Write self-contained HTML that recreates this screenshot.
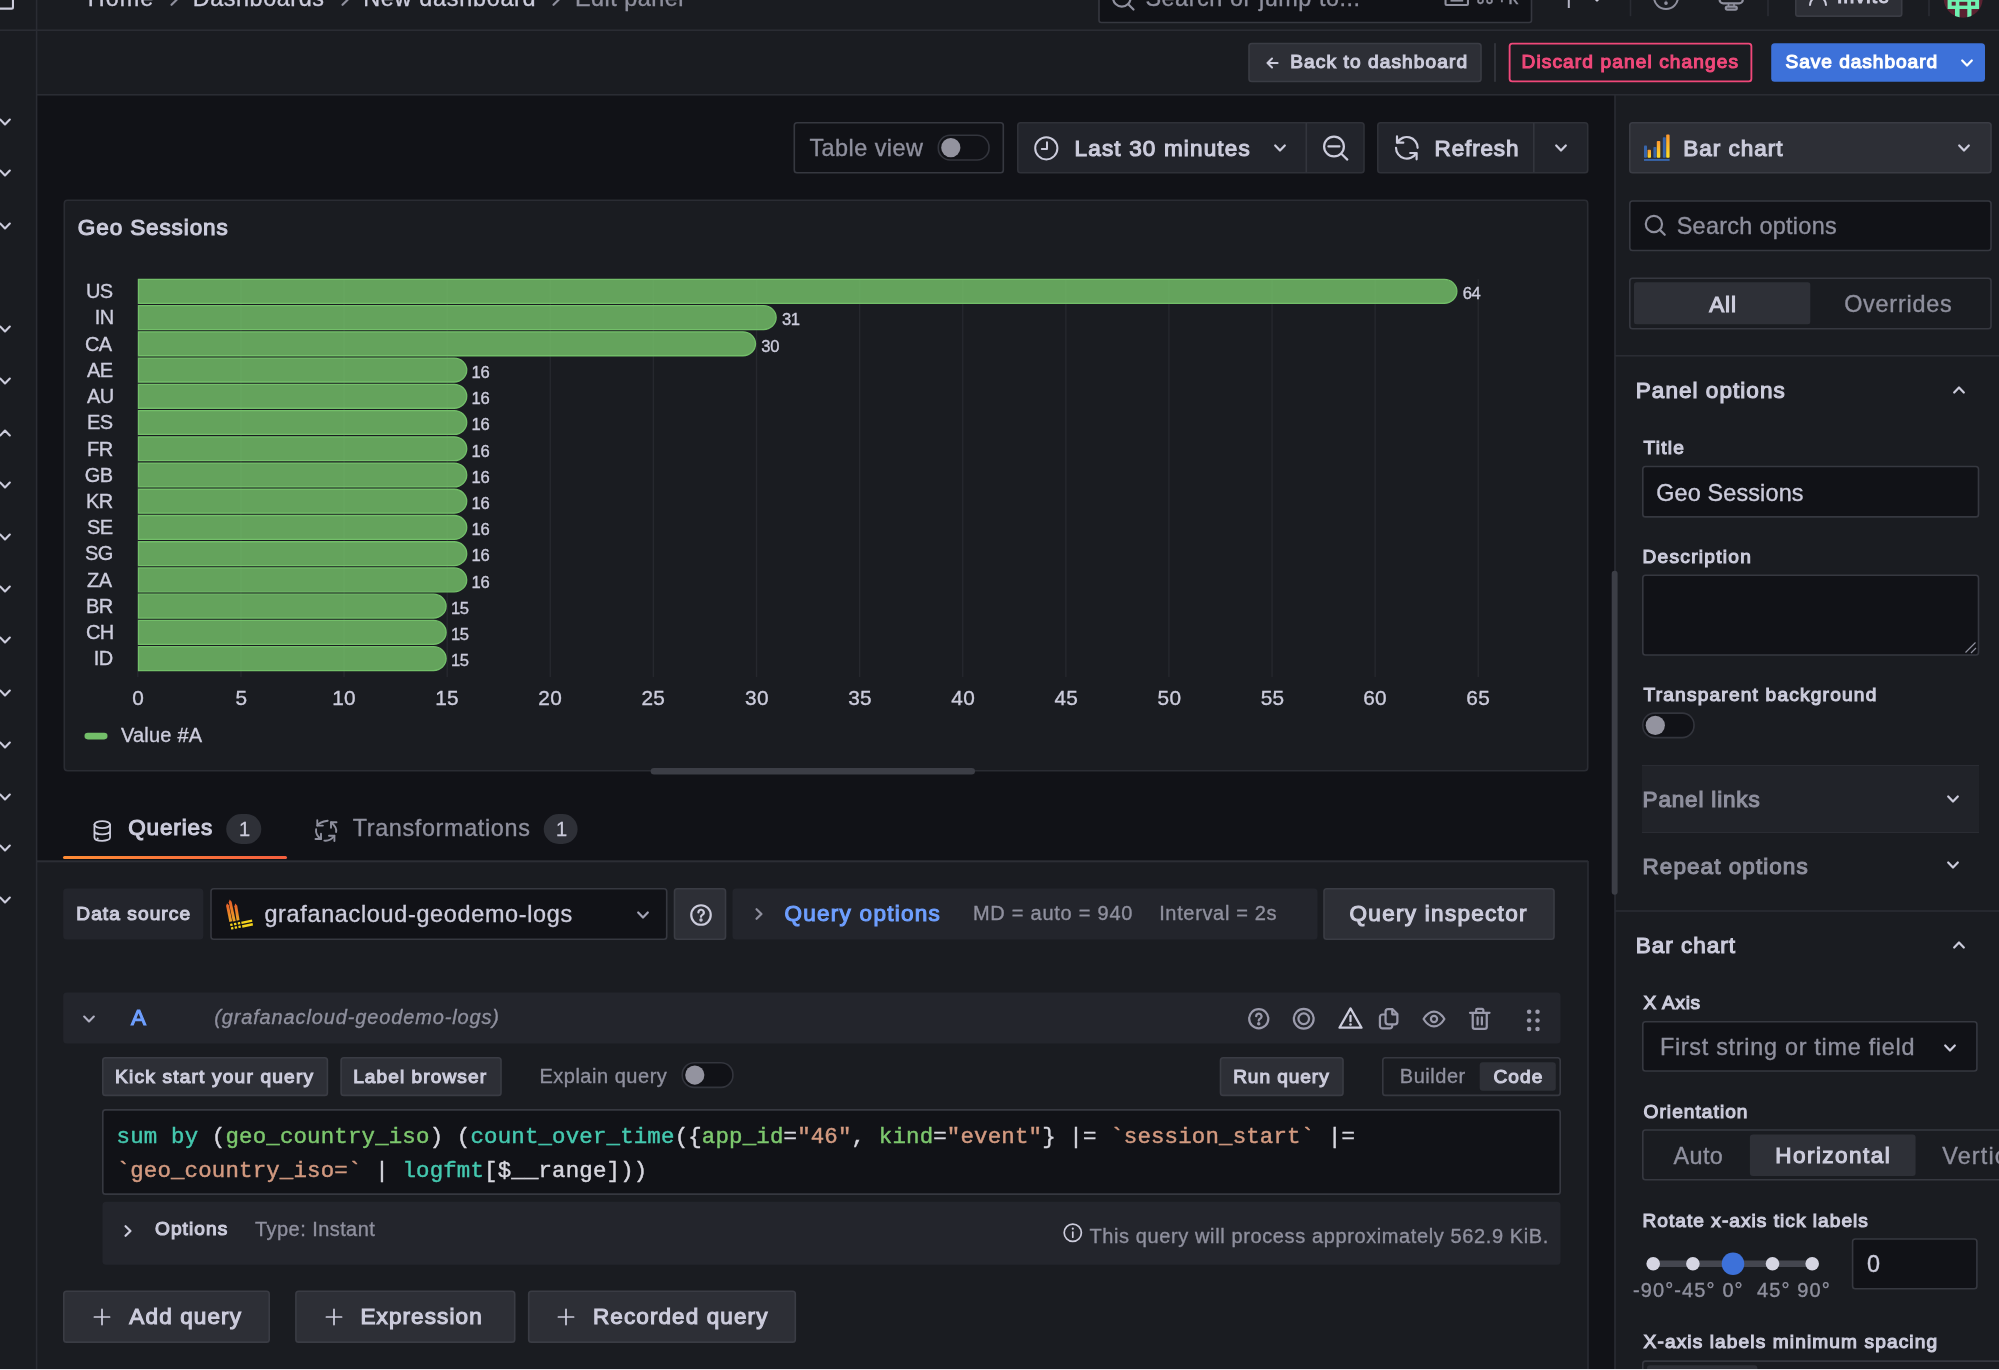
<!DOCTYPE html>
<html lang="en"><head><meta charset="utf-8"><title>Edit panel - New dashboard - Dashboards - Grafana</title>
<style>
html,body{margin:0;padding:0;background:#1a1c21;}
body{width:1999px;height:1370px;position:relative;overflow:hidden;font-family:'Liberation Sans', Arial, sans-serif;color:#ccccdc;}
.b{position:absolute;box-sizing:border-box;display:block}
.t{position:absolute;white-space:pre;font-kerning:normal}
svg{overflow:visible}
#app{position:absolute;left:0;top:0;width:1999px;height:1370px;overflow:hidden;will-change:transform}
</style></head><body><div id="app">
<svg class="b" style="left:-1px;top:-1px" width="2001" height="1372" viewBox="-1 -1 2001 1372"><rect x="0.00" y="0.00" width="1999.00" height="1370.00" rx="0.00" fill="#1a1c21" stroke="none" stroke-width="0"/></svg>
<svg class="b" style="left:36px;top:94px" width="1580" height="768" viewBox="36 94 1580 768"><rect x="37.00" y="95.00" width="1578.00" height="766.00" rx="0.00" fill="#111217" stroke="none" stroke-width="0"/></svg>
<svg class="b" style="left:1587px;top:860px" width="29" height="511" viewBox="1587 860 29 511"><rect x="1588.00" y="861.00" width="27.00" height="509.00" rx="0.00" fill="#111217" stroke="none" stroke-width="0"/></svg>
<svg class="b" style="left:-1px;top:27px" width="2001" height="6" viewBox="-1 27 2001 6"><rect x="0.00" y="29.40" width="1999.00" height="1.6" fill="#2a2c33"/></svg>
<svg class="b" style="left:34px;top:-1px" width="6" height="1372" viewBox="34 -1 6 1372"><rect x="35.80" y="0.00" width="1.6" height="1370.00" fill="#2a2c33"/></svg>
<svg class="b" style="left:-5px;top:-14px" width="20" height="25" viewBox="-5 -14 20 25"><rect x="-2.46" y="-11.46" width="15.42" height="20.12" rx="1.46" fill="none" stroke="#ccccdc" stroke-width="2.08"/></svg>
<span class="t" style="left:87.67px;top:-13px;font-size:23.4px;line-height:23.4px;color:#ccccdc;letter-spacing:1.088px;-webkit-text-stroke:0.35px #ccccdc;">Home</span>
<span class="t" style="left:192.68px;top:-13px;font-size:23.4px;line-height:23.4px;color:#ccccdc;letter-spacing:0.580px;-webkit-text-stroke:0.35px #ccccdc;">Dashboards</span>
<span class="t" style="left:363.18px;top:-13px;font-size:23.4px;line-height:23.4px;color:#ccccdc;letter-spacing:0.718px;-webkit-text-stroke:0.35px #ccccdc;">New dashboard</span>
<span class="t" style="left:574.97px;top:-13px;font-size:23.4px;line-height:23.4px;color:#8f909e;letter-spacing:0.501px;-webkit-text-stroke:0.35px #8f909e;">Edit panel</span>
<svg class="b" style="left:163.50px;top:-10.00px" width="20" height="20" viewBox="-10 -10 20 20"><path d="M-2.45 -4.8 L2.45 0 L-2.45 4.8" fill="none" stroke="#8f909e" stroke-width="2.2" stroke-linecap="round" stroke-linejoin="round"/></svg>
<svg class="b" style="left:334.50px;top:-10.00px" width="20" height="20" viewBox="-10 -10 20 20"><path d="M-2.45 -4.8 L2.45 0 L-2.45 4.8" fill="none" stroke="#8f909e" stroke-width="2.2" stroke-linecap="round" stroke-linejoin="round"/></svg>
<svg class="b" style="left:546.00px;top:-10.00px" width="20" height="20" viewBox="-10 -10 20 20"><path d="M-2.45 -4.8 L2.45 0 L-2.45 4.8" fill="none" stroke="#8f909e" stroke-width="2.2" stroke-linecap="round" stroke-linejoin="round"/></svg>
<svg class="b" style="left:1097px;top:-32px" width="437" height="57" viewBox="1097 -32 437 57"><rect x="1099.00" y="-29.70" width="432.50" height="52.20" rx="2.20" fill="#111217" stroke="#363840" stroke-width="1.6"/></svg>
<svg class="b" style="left:1109.40px;top:-14.90px;" width="28.00" height="28.00" viewBox="0 0 24 24"><g fill="none" stroke="#8f909e" stroke-width="1.9" stroke-linecap="round" stroke-linejoin="round"><circle cx="11" cy="11" r="7.5"/><path d="M16.5 16.5 L21 21"/></g></svg>
<span class="t" style="left:1145.38px;top:-13px;font-size:23.4px;line-height:23.4px;color:#8f909e;letter-spacing:0.560px;-webkit-text-stroke:0.35px #8f909e;">Search or jump to...</span>
<svg class="b" style="left:1443px;top:-12px" width="27" height="20" viewBox="1443 -12 27 20"><rect x="1445.54" y="-9.46" width="22.42" height="14.52" rx="0.96" fill="none" stroke="#8f909e" stroke-width="2.08"/></svg>
<svg class="b" style="left:1449px;top:-3px" width="16" height="7" viewBox="1449 -3 16 7"><rect x="1450.50" y="-0.80" width="12.70" height="2.4" fill="#8f909e"/></svg>
<span class="t" style="left:1475.17px;top:-13px;font-size:20.0px;line-height:20.0px;color:#8f909e;letter-spacing:0.735px;-webkit-text-stroke:0.35px #8f909e;">⌘+k</span>
<svg class="b" style="left:1565px;top:-11px" width="7" height="20" viewBox="1565 -11 7 20"><rect x="1567.80" y="-10.00" width="2" height="18.00" fill="#b4b4c4"/></svg>
<svg class="b" style="left:1587.00px;top:-12.20px" width="20" height="20" viewBox="-10 -10 20 20"><path d="M-4.8 -2.45 L0 2.45 L4.8 -2.45" fill="none" stroke="#ccccdc" stroke-width="2.25" stroke-linecap="round" stroke-linejoin="round"/></svg>
<svg class="b" style="left:1627px;top:-6px" width="7" height="24" viewBox="1627 -6 7 24"><rect x="1629.70" y="-5.00" width="1.6" height="21.20" fill="#2a2c33"/></svg>
<svg class="b" style="left:1650.00px;top:-19.50px;" width="32.00" height="32.00" viewBox="0 0 24 24"><g fill="none" stroke="#8f909e" stroke-width="1.5" stroke-linecap="round" stroke-linejoin="round"><circle cx="12" cy="12" r="9"/><path d="M9.6 9.6 a2.5 2.5 0 1 1 3.6 2.3 c-.8 .4 -1.2 .9 -1.2 1.8"/><circle cx="12" cy="16.6" r=".6" fill="currentColor"/></g></svg>
<svg class="b" style="left:1714.00px;top:-14.00px;" width="34.00" height="26.00" viewBox="0 0 34 26"><g fill="none" stroke="#8f909e" stroke-width="2.2" stroke-linecap="round" stroke-linejoin="round"><rect x="5.6" y="-4" width="23.2" height="21.4" rx="3.6"/><rect x="11.8" y="20.6" width="11" height="3" rx="1.5"/><path d="M14.5 18 V20 M20 18 V20" stroke-width="1.6"/></g></svg>
<svg class="b" style="left:1765px;top:-6px" width="6" height="24" viewBox="1765 -6 6 24"><rect x="1767.20" y="-5.00" width="1.6" height="21.20" fill="#2a2c33"/></svg>
<svg class="b" style="left:1794px;top:-24px" width="110" height="42" viewBox="1794 -24 110 42"><rect x="1795.80" y="-21.70" width="105.90" height="37.80" rx="2.20" fill="#2d2f36" stroke="#3a3c44" stroke-width="1.6"/></svg>
<svg class="b" style="left:1808.00px;top:-14.00px;" width="20.00" height="20.00" viewBox="0 0 20 20"><g fill="none" stroke="#ccccdc" stroke-width="2" stroke-linecap="round"><circle cx="10" cy="3" r="5"/><path d="M2 19 a8 8 0 0 1 16 0"/></g></svg>
<span class="t" style="left:1837.05px;top:-13px;font-size:19.12px;line-height:19.12px;color:#ccccdc;letter-spacing:1.211px;-webkit-text-stroke:1.1px #ccccdc;">Invite</span>
<svg class="b" style="left:1926px;top:-6px" width="6" height="24" viewBox="1926 -6 6 24"><rect x="1928.20" y="-5.00" width="1.6" height="21.20" fill="#2a2c33"/></svg>
<svg class="b" style="left:1940px;top:-24px" width="48" height="48" viewBox="1940 -24 48 48"><defs><clipPath id="av"><circle cx="1963.2" cy="-1.8" r="19.5"/></clipPath></defs><g clip-path="url(#av)"><rect x="1940" y="-24" width="48" height="48" fill="#5a2231"/><rect x="1947.6" y="-24" width="31.5" height="33" fill="#6ef0b0"/><rect x="1951.7" y="1.8" width="4" height="3.8" fill="#5a2231"/><rect x="1959.3" y="1.8" width="8" height="3.8" fill="#5a2231"/><rect x="1971" y="1.8" width="4.2" height="3.8" fill="#5a2231"/><rect x="1955" y="8" width="4.6" height="14" fill="#6ef0b0"/><rect x="1967.3" y="8" width="4.2" height="14" fill="#6ef0b0"/></g></svg>
<svg class="b" style="left:36px;top:92px" width="1964" height="6" viewBox="36 92 1964 6"><rect x="37.00" y="94.00" width="1962.00" height="1.6" fill="#2a2c33"/></svg>
<svg class="b" style="left:1247px;top:41px" width="236" height="43" viewBox="1247 41 236 43"><rect x="1249.00" y="43.50" width="232.00" height="38.00" rx="2.70" fill="#2d2f36" stroke="#3a3c44" stroke-width="1.6"/></svg>
<svg class="b" style="left:1264.50px;top:55.50px;" width="14.00" height="14.00" viewBox="0 0 14 14"><path d="M12.6 7 H2.8 M7 2.5 L2.5 7 L7 11.5" fill="none" stroke="#ccccdc" stroke-width="2" stroke-linecap="round" stroke-linejoin="round"/></svg>
<span class="t" style="left:1290.25px;top:52px;font-size:19.12px;line-height:19.12px;color:#ccccdc;letter-spacing:1.092px;-webkit-text-stroke:1.1px #ccccdc;">Back to dashboard</span>
<svg class="b" style="left:1492px;top:42px" width="6" height="41" viewBox="1492 42 6 41"><rect x="1494.20" y="43.20" width="1.6" height="38.60" fill="#363840"/></svg>
<svg class="b" style="left:1507px;top:41px" width="247" height="43" viewBox="1507 41 247 43"><rect x="1509.62" y="43.62" width="241.76" height="37.76" rx="2.58" fill="none" stroke="#f0487a" stroke-width="1.8399999999999999"/></svg>
<span class="t" style="left:1521.55px;top:52px;font-size:19.12px;line-height:19.12px;color:#f0487a;letter-spacing:1.103px;-webkit-text-stroke:1.1px #f0487a;">Discard panel changes</span>
<svg class="b" style="left:1770px;top:42px" width="216" height="41" viewBox="1770 42 216 41"><rect x="1771.20" y="43.20" width="213.80" height="38.60" rx="3.50" fill="#3d71d9" stroke="none" stroke-width="0"/></svg>
<span class="t" style="left:1785.55px;top:52px;font-size:19.12px;line-height:19.12px;color:#ffffff;letter-spacing:0.950px;-webkit-text-stroke:1.1px #ffffff;">Save dashboard</span>
<svg class="b" style="left:1957.25px;top:53.00px" width="20" height="20" viewBox="-10 -10 20 20"><path d="M-4.8 -2.45 L0 2.45 L4.8 -2.45" fill="none" stroke="#ffffff" stroke-width="2.25" stroke-linecap="round" stroke-linejoin="round"/></svg>
<svg class="b" style="left:-4.80px;top:111.80px" width="20" height="20" viewBox="-10 -10 20 20"><path d="M-4.8 -2.45 L0 2.45 L4.8 -2.45" fill="none" stroke="#ccccdc" stroke-width="2.1" stroke-linecap="round" stroke-linejoin="round"/></svg>
<svg class="b" style="left:-4.80px;top:163.30px" width="20" height="20" viewBox="-10 -10 20 20"><path d="M-4.8 -2.45 L0 2.45 L4.8 -2.45" fill="none" stroke="#ccccdc" stroke-width="2.1" stroke-linecap="round" stroke-linejoin="round"/></svg>
<svg class="b" style="left:-4.80px;top:215.50px" width="20" height="20" viewBox="-10 -10 20 20"><path d="M-4.8 -2.45 L0 2.45 L4.8 -2.45" fill="none" stroke="#ccccdc" stroke-width="2.1" stroke-linecap="round" stroke-linejoin="round"/></svg>
<svg class="b" style="left:-4.80px;top:318.80px" width="20" height="20" viewBox="-10 -10 20 20"><path d="M-4.8 -2.45 L0 2.45 L4.8 -2.45" fill="none" stroke="#ccccdc" stroke-width="2.1" stroke-linecap="round" stroke-linejoin="round"/></svg>
<svg class="b" style="left:-4.80px;top:371.20px" width="20" height="20" viewBox="-10 -10 20 20"><path d="M-4.8 -2.45 L0 2.45 L4.8 -2.45" fill="none" stroke="#ccccdc" stroke-width="2.1" stroke-linecap="round" stroke-linejoin="round"/></svg>
<svg class="b" style="left:-4.80px;top:475.00px" width="20" height="20" viewBox="-10 -10 20 20"><path d="M-4.8 -2.45 L0 2.45 L4.8 -2.45" fill="none" stroke="#ccccdc" stroke-width="2.1" stroke-linecap="round" stroke-linejoin="round"/></svg>
<svg class="b" style="left:-4.80px;top:527.00px" width="20" height="20" viewBox="-10 -10 20 20"><path d="M-4.8 -2.45 L0 2.45 L4.8 -2.45" fill="none" stroke="#ccccdc" stroke-width="2.1" stroke-linecap="round" stroke-linejoin="round"/></svg>
<svg class="b" style="left:-4.80px;top:579.00px" width="20" height="20" viewBox="-10 -10 20 20"><path d="M-4.8 -2.45 L0 2.45 L4.8 -2.45" fill="none" stroke="#ccccdc" stroke-width="2.1" stroke-linecap="round" stroke-linejoin="round"/></svg>
<svg class="b" style="left:-4.80px;top:630.30px" width="20" height="20" viewBox="-10 -10 20 20"><path d="M-4.8 -2.45 L0 2.45 L4.8 -2.45" fill="none" stroke="#ccccdc" stroke-width="2.1" stroke-linecap="round" stroke-linejoin="round"/></svg>
<svg class="b" style="left:-4.80px;top:682.80px" width="20" height="20" viewBox="-10 -10 20 20"><path d="M-4.8 -2.45 L0 2.45 L4.8 -2.45" fill="none" stroke="#ccccdc" stroke-width="2.1" stroke-linecap="round" stroke-linejoin="round"/></svg>
<svg class="b" style="left:-4.80px;top:734.80px" width="20" height="20" viewBox="-10 -10 20 20"><path d="M-4.8 -2.45 L0 2.45 L4.8 -2.45" fill="none" stroke="#ccccdc" stroke-width="2.1" stroke-linecap="round" stroke-linejoin="round"/></svg>
<svg class="b" style="left:-4.80px;top:786.50px" width="20" height="20" viewBox="-10 -10 20 20"><path d="M-4.8 -2.45 L0 2.45 L4.8 -2.45" fill="none" stroke="#ccccdc" stroke-width="2.1" stroke-linecap="round" stroke-linejoin="round"/></svg>
<svg class="b" style="left:-4.80px;top:838.30px" width="20" height="20" viewBox="-10 -10 20 20"><path d="M-4.8 -2.45 L0 2.45 L4.8 -2.45" fill="none" stroke="#ccccdc" stroke-width="2.1" stroke-linecap="round" stroke-linejoin="round"/></svg>
<svg class="b" style="left:-4.80px;top:889.80px" width="20" height="20" viewBox="-10 -10 20 20"><path d="M-4.8 -2.45 L0 2.45 L4.8 -2.45" fill="none" stroke="#ccccdc" stroke-width="2.1" stroke-linecap="round" stroke-linejoin="round"/></svg>
<svg class="b" style="left:-4.80px;top:423.20px" width="20" height="20" viewBox="-10 -10 20 20"><path d="M-4.8 2.45 L0 -2.45 L4.8 2.45" fill="none" stroke="#ccccdc" stroke-width="2.1" stroke-linecap="round" stroke-linejoin="round"/></svg>
<svg class="b" style="left:792px;top:121px" width="214" height="54" viewBox="792 121 214 54"><rect x="794.30" y="122.80" width="209.00" height="49.90" rx="2.70" fill="none" stroke="#363840" stroke-width="1.6"/></svg>
<span class="t" style="left:809.38px;top:137px;font-size:23.4px;line-height:23.4px;color:#8f909e;letter-spacing:0.481px;-webkit-text-stroke:0.35px #8f909e;">Table view</span>
<svg class="b" style="left:936px;top:133px" width="55" height="29" viewBox="936 133 55 29"><rect x="938.30" y="135.30" width="50.70" height="24.70" rx="11.85" fill="#111217" stroke="#33353d" stroke-width="1.6"/></svg>
<svg class="b" style="left:940px;top:137px" width="22" height="22" viewBox="940 137 22 22"><rect x="941.20" y="138.05" width="19.20" height="19.20" rx="9.60" fill="#93939f" stroke="none" stroke-width="0"/></svg>
<svg class="b" style="left:1016px;top:121px" width="350" height="54" viewBox="1016 121 350 54"><rect x="1017.80" y="122.80" width="346.20" height="49.90" rx="2.70" fill="#22242b" stroke="#2f3138" stroke-width="1.6"/></svg>
<svg class="b" style="left:1303px;top:122px" width="6" height="52" viewBox="1303 122 6 52"><rect x="1305.50" y="123.00" width="1.6" height="49.50" fill="#33353d"/></svg>
<svg class="b" style="left:1034.30px;top:135.50px;" width="24.60" height="24.60" viewBox="0 0 24.6 24.6"><g fill="none" stroke="#ccccdc" stroke-width="2.0" stroke-linecap="round" stroke-linejoin="round"><circle cx="12.3" cy="12.3" r="11.1"/><path d="M13 6.2 V13 H7.8"/></g></svg>
<span class="t" style="left:1074.55px;top:138px;font-size:22.52px;line-height:22.52px;color:#ccccdc;letter-spacing:1.158px;-webkit-text-stroke:1.1px #ccccdc;">Last 30 minutes</span>
<svg class="b" style="left:1270.30px;top:137.65px" width="20" height="20" viewBox="-10 -10 20 20"><path d="M-4.8 -2.45 L0 2.45 L4.8 -2.45" fill="none" stroke="#ccccdc" stroke-width="2.25" stroke-linecap="round" stroke-linejoin="round"/></svg>
<svg class="b" style="left:1322.00px;top:135.00px;" width="27.00" height="27.00" viewBox="0 0 27 27"><g fill="none" stroke="#ccccdc" stroke-width="2.2" stroke-linecap="round"><circle cx="12" cy="11.5" r="9.9"/><path d="M19.3 18.8 L25.3 24.6 M6.4 11.4 H17.4"/></g></svg>
<svg class="b" style="left:1376px;top:121px" width="214" height="54" viewBox="1376 121 214 54"><rect x="1377.80" y="122.80" width="209.90" height="49.90" rx="2.70" fill="#22242b" stroke="#2f3138" stroke-width="1.6"/></svg>
<svg class="b" style="left:1531px;top:122px" width="6" height="52" viewBox="1531 122 6 52"><rect x="1533.00" y="123.00" width="1.6" height="49.50" fill="#33353d"/></svg>
<svg class="b" style="left:1394.00px;top:135.00px;" width="25.50" height="25.50" viewBox="0 0 25.5 25.5"><g fill="none" stroke="#ccccdc" stroke-width="2.2" stroke-linecap="round" stroke-linejoin="round"><path d="M3.4 7.5 A10.8 10.8 0 0 1 23.6 12.8 M2 12.8 A10.8 10.8 0 0 0 22.2 18.1"/><path d="M3 1.4 V7.7 H9.3 M16.2 18 H22.6 V24.3"/></g></svg>
<span class="t" style="left:1434.55px;top:138px;font-size:22.52px;line-height:22.52px;color:#ccccdc;letter-spacing:0.847px;-webkit-text-stroke:1.1px #ccccdc;">Refresh</span>
<svg class="b" style="left:1550.75px;top:137.65px" width="20" height="20" viewBox="-10 -10 20 20"><path d="M-4.8 -2.45 L0 2.45 L4.8 -2.45" fill="none" stroke="#ccccdc" stroke-width="2.25" stroke-linecap="round" stroke-linejoin="round"/></svg>
<svg class="b" style="left:62px;top:198px" width="1528" height="575" viewBox="62 198 1528 575"><rect x="64.30" y="200.30" width="1523.40" height="570.40" rx="3.20" fill="#1a1c21" stroke="#2a2c33" stroke-width="1.6"/></svg>
<span class="t" style="left:77.85px;top:217px;font-size:22.52px;line-height:22.52px;color:#ccccdc;letter-spacing:0.880px;-webkit-text-stroke:1.1px #ccccdc;">Geo Sessions</span>
<svg class="b" style="left:0.00px;top:0.00px;pointer-events:none;" width="1999.00" height="700.00" viewBox="0 0 1999 700"><line x1="137.85" y1="279" x2="137.85" y2="677" stroke="#26282e" stroke-width="1.4"/><line x1="240.96" y1="279" x2="240.96" y2="677" stroke="#26282e" stroke-width="1.4"/><line x1="344.07" y1="279" x2="344.07" y2="677" stroke="#26282e" stroke-width="1.4"/><line x1="447.18" y1="279" x2="447.18" y2="677" stroke="#26282e" stroke-width="1.4"/><line x1="550.29" y1="279" x2="550.29" y2="677" stroke="#26282e" stroke-width="1.4"/><line x1="653.40" y1="279" x2="653.40" y2="677" stroke="#26282e" stroke-width="1.4"/><line x1="756.51" y1="279" x2="756.51" y2="677" stroke="#26282e" stroke-width="1.4"/><line x1="859.62" y1="279" x2="859.62" y2="677" stroke="#26282e" stroke-width="1.4"/><line x1="962.73" y1="279" x2="962.73" y2="677" stroke="#26282e" stroke-width="1.4"/><line x1="1065.84" y1="279" x2="1065.84" y2="677" stroke="#26282e" stroke-width="1.4"/><line x1="1168.95" y1="279" x2="1168.95" y2="677" stroke="#26282e" stroke-width="1.4"/><line x1="1272.06" y1="279" x2="1272.06" y2="677" stroke="#26282e" stroke-width="1.4"/><line x1="1375.17" y1="279" x2="1375.17" y2="677" stroke="#26282e" stroke-width="1.4"/><line x1="1478.28" y1="279" x2="1478.28" y2="677" stroke="#26282e" stroke-width="1.4"/><path d="M138.50 279.40 H1444.29 A12.60 11.95 0 0 1 1444.29 303.30 H138.50 Z" fill="#73bf69" fill-opacity=".83" stroke="#73bf69" stroke-width="1.3"/><path d="M138.50 305.63 H763.57 A12.60 11.95 0 0 1 763.57 329.53 H138.50 Z" fill="#73bf69" fill-opacity=".83" stroke="#73bf69" stroke-width="1.3"/><path d="M138.50 331.87 H742.94 A12.60 11.95 0 0 1 742.94 355.77 H138.50 Z" fill="#73bf69" fill-opacity=".83" stroke="#73bf69" stroke-width="1.3"/><path d="M138.50 358.10 H454.15 A12.60 11.95 0 0 1 454.15 382.00 H138.50 Z" fill="#73bf69" fill-opacity=".83" stroke="#73bf69" stroke-width="1.3"/><path d="M138.50 384.33 H454.15 A12.60 11.95 0 0 1 454.15 408.23 H138.50 Z" fill="#73bf69" fill-opacity=".83" stroke="#73bf69" stroke-width="1.3"/><path d="M138.50 410.56 H454.15 A12.60 11.95 0 0 1 454.15 434.46 H138.50 Z" fill="#73bf69" fill-opacity=".83" stroke="#73bf69" stroke-width="1.3"/><path d="M138.50 436.80 H454.15 A12.60 11.95 0 0 1 454.15 460.70 H138.50 Z" fill="#73bf69" fill-opacity=".83" stroke="#73bf69" stroke-width="1.3"/><path d="M138.50 463.03 H454.15 A12.60 11.95 0 0 1 454.15 486.93 H138.50 Z" fill="#73bf69" fill-opacity=".83" stroke="#73bf69" stroke-width="1.3"/><path d="M138.50 489.26 H454.15 A12.60 11.95 0 0 1 454.15 513.16 H138.50 Z" fill="#73bf69" fill-opacity=".83" stroke="#73bf69" stroke-width="1.3"/><path d="M138.50 515.50 H454.15 A12.60 11.95 0 0 1 454.15 539.40 H138.50 Z" fill="#73bf69" fill-opacity=".83" stroke="#73bf69" stroke-width="1.3"/><path d="M138.50 541.73 H454.15 A12.60 11.95 0 0 1 454.15 565.63 H138.50 Z" fill="#73bf69" fill-opacity=".83" stroke="#73bf69" stroke-width="1.3"/><path d="M138.50 567.96 H454.15 A12.60 11.95 0 0 1 454.15 591.86 H138.50 Z" fill="#73bf69" fill-opacity=".83" stroke="#73bf69" stroke-width="1.3"/><path d="M138.50 594.20 H433.52 A12.60 11.95 0 0 1 433.52 618.10 H138.50 Z" fill="#73bf69" fill-opacity=".83" stroke="#73bf69" stroke-width="1.3"/><path d="M138.50 620.43 H433.52 A12.60 11.95 0 0 1 433.52 644.33 H138.50 Z" fill="#73bf69" fill-opacity=".83" stroke="#73bf69" stroke-width="1.3"/><path d="M138.50 646.66 H433.52 A12.60 11.95 0 0 1 433.52 670.56 H138.50 Z" fill="#73bf69" fill-opacity=".83" stroke="#73bf69" stroke-width="1.3"/></svg>
<span class="t" style="left:85.88px;top:281px;font-size:20.0px;line-height:20.0px;color:#ccccdc;letter-spacing:-0.500px;-webkit-text-stroke:0.35px #ccccdc;">US</span>
<span class="t" style="left:1462.70px;top:286px;font-size:16.6px;line-height:16.6px;color:#ccccdc;letter-spacing:-0.400px;-webkit-text-stroke:0.35px #ccccdc;">64</span>
<span class="t" style="left:94.77px;top:307px;font-size:20.0px;line-height:20.0px;color:#ccccdc;letter-spacing:-0.500px;-webkit-text-stroke:0.35px #ccccdc;">IN</span>
<span class="t" style="left:781.97px;top:312px;font-size:16.6px;line-height:16.6px;color:#ccccdc;letter-spacing:-0.400px;-webkit-text-stroke:0.35px #ccccdc;">31</span>
<span class="t" style="left:84.88px;top:334px;font-size:20.0px;line-height:20.0px;color:#ccccdc;letter-spacing:-0.500px;-webkit-text-stroke:0.35px #ccccdc;">CA</span>
<span class="t" style="left:761.35px;top:339px;font-size:16.6px;line-height:16.6px;color:#ccccdc;letter-spacing:-0.400px;-webkit-text-stroke:0.35px #ccccdc;">30</span>
<span class="t" style="left:86.99px;top:360px;font-size:20.0px;line-height:20.0px;color:#ccccdc;letter-spacing:-0.500px;-webkit-text-stroke:0.35px #ccccdc;">AE</span>
<span class="t" style="left:471.55px;top:365px;font-size:16.6px;line-height:16.6px;color:#ccccdc;letter-spacing:-0.400px;-webkit-text-stroke:0.35px #ccccdc;">16</span>
<span class="t" style="left:86.99px;top:386px;font-size:20.0px;line-height:20.0px;color:#ccccdc;letter-spacing:-0.500px;-webkit-text-stroke:0.35px #ccccdc;">AU</span>
<span class="t" style="left:471.55px;top:391px;font-size:16.6px;line-height:16.6px;color:#ccccdc;letter-spacing:-0.400px;-webkit-text-stroke:0.35px #ccccdc;">16</span>
<span class="t" style="left:86.99px;top:412px;font-size:20.0px;line-height:20.0px;color:#ccccdc;letter-spacing:-0.500px;-webkit-text-stroke:0.35px #ccccdc;">ES</span>
<span class="t" style="left:471.55px;top:417px;font-size:16.6px;line-height:16.6px;color:#ccccdc;letter-spacing:-0.400px;-webkit-text-stroke:0.35px #ccccdc;">16</span>
<span class="t" style="left:87.11px;top:439px;font-size:20.0px;line-height:20.0px;color:#ccccdc;letter-spacing:-0.500px;-webkit-text-stroke:0.35px #ccccdc;">FR</span>
<span class="t" style="left:471.55px;top:444px;font-size:16.6px;line-height:16.6px;color:#ccccdc;letter-spacing:-0.400px;-webkit-text-stroke:0.35px #ccccdc;">16</span>
<span class="t" style="left:84.77px;top:465px;font-size:20.0px;line-height:20.0px;color:#ccccdc;letter-spacing:-0.500px;-webkit-text-stroke:0.35px #ccccdc;">GB</span>
<span class="t" style="left:471.55px;top:470px;font-size:16.6px;line-height:16.6px;color:#ccccdc;letter-spacing:-0.400px;-webkit-text-stroke:0.35px #ccccdc;">16</span>
<span class="t" style="left:85.99px;top:491px;font-size:20.0px;line-height:20.0px;color:#ccccdc;letter-spacing:-0.500px;-webkit-text-stroke:0.35px #ccccdc;">KR</span>
<span class="t" style="left:471.55px;top:496px;font-size:16.6px;line-height:16.6px;color:#ccccdc;letter-spacing:-0.400px;-webkit-text-stroke:0.35px #ccccdc;">16</span>
<span class="t" style="left:86.99px;top:517px;font-size:20.0px;line-height:20.0px;color:#ccccdc;letter-spacing:-0.500px;-webkit-text-stroke:0.35px #ccccdc;">SE</span>
<span class="t" style="left:471.55px;top:522px;font-size:16.6px;line-height:16.6px;color:#ccccdc;letter-spacing:-0.400px;-webkit-text-stroke:0.35px #ccccdc;">16</span>
<span class="t" style="left:84.99px;top:543px;font-size:20.0px;line-height:20.0px;color:#ccccdc;letter-spacing:-0.500px;-webkit-text-stroke:0.35px #ccccdc;">SG</span>
<span class="t" style="left:471.55px;top:548px;font-size:16.6px;line-height:16.6px;color:#ccccdc;letter-spacing:-0.400px;-webkit-text-stroke:0.35px #ccccdc;">16</span>
<span class="t" style="left:87.11px;top:570px;font-size:20.0px;line-height:20.0px;color:#ccccdc;letter-spacing:-0.500px;-webkit-text-stroke:0.35px #ccccdc;">ZA</span>
<span class="t" style="left:471.55px;top:575px;font-size:16.6px;line-height:16.6px;color:#ccccdc;letter-spacing:-0.400px;-webkit-text-stroke:0.35px #ccccdc;">16</span>
<span class="t" style="left:85.99px;top:596px;font-size:20.0px;line-height:20.0px;color:#ccccdc;letter-spacing:-0.500px;-webkit-text-stroke:0.35px #ccccdc;">BR</span>
<span class="t" style="left:450.93px;top:601px;font-size:16.6px;line-height:16.6px;color:#ccccdc;letter-spacing:-0.400px;-webkit-text-stroke:0.35px #ccccdc;">15</span>
<span class="t" style="left:85.88px;top:622px;font-size:20.0px;line-height:20.0px;color:#ccccdc;letter-spacing:-0.500px;-webkit-text-stroke:0.35px #ccccdc;">CH</span>
<span class="t" style="left:450.93px;top:627px;font-size:16.6px;line-height:16.6px;color:#ccccdc;letter-spacing:-0.400px;-webkit-text-stroke:0.35px #ccccdc;">15</span>
<span class="t" style="left:93.77px;top:648px;font-size:20.0px;line-height:20.0px;color:#ccccdc;letter-spacing:-0.500px;-webkit-text-stroke:0.35px #ccccdc;">ID</span>
<span class="t" style="left:450.93px;top:653px;font-size:16.6px;line-height:16.6px;color:#ccccdc;letter-spacing:-0.400px;-webkit-text-stroke:0.35px #ccccdc;">15</span>
<span class="t" style="left:132.35px;top:688px;font-size:20.8px;line-height:20.8px;color:#ccccdc;letter-spacing:0.300px;-webkit-text-stroke:0.35px #ccccdc;">0</span>
<span class="t" style="left:235.46px;top:688px;font-size:20.8px;line-height:20.8px;color:#ccccdc;letter-spacing:0.300px;-webkit-text-stroke:0.35px #ccccdc;">5</span>
<span class="t" style="left:332.14px;top:688px;font-size:20.8px;line-height:20.8px;color:#ccccdc;letter-spacing:0.300px;-webkit-text-stroke:0.35px #ccccdc;">10</span>
<span class="t" style="left:435.25px;top:688px;font-size:20.8px;line-height:20.8px;color:#ccccdc;letter-spacing:0.300px;-webkit-text-stroke:0.35px #ccccdc;">15</span>
<span class="t" style="left:538.36px;top:688px;font-size:20.8px;line-height:20.8px;color:#ccccdc;letter-spacing:0.300px;-webkit-text-stroke:0.35px #ccccdc;">20</span>
<span class="t" style="left:641.47px;top:688px;font-size:20.8px;line-height:20.8px;color:#ccccdc;letter-spacing:0.300px;-webkit-text-stroke:0.35px #ccccdc;">25</span>
<span class="t" style="left:745.08px;top:688px;font-size:20.8px;line-height:20.8px;color:#ccccdc;letter-spacing:0.300px;-webkit-text-stroke:0.35px #ccccdc;">30</span>
<span class="t" style="left:848.19px;top:688px;font-size:20.8px;line-height:20.8px;color:#ccccdc;letter-spacing:0.300px;-webkit-text-stroke:0.35px #ccccdc;">35</span>
<span class="t" style="left:951.30px;top:688px;font-size:20.8px;line-height:20.8px;color:#ccccdc;letter-spacing:0.300px;-webkit-text-stroke:0.35px #ccccdc;">40</span>
<span class="t" style="left:1054.41px;top:688px;font-size:20.8px;line-height:20.8px;color:#ccccdc;letter-spacing:0.300px;-webkit-text-stroke:0.35px #ccccdc;">45</span>
<span class="t" style="left:1157.52px;top:688px;font-size:20.8px;line-height:20.8px;color:#ccccdc;letter-spacing:0.300px;-webkit-text-stroke:0.35px #ccccdc;">50</span>
<span class="t" style="left:1260.63px;top:688px;font-size:20.8px;line-height:20.8px;color:#ccccdc;letter-spacing:0.300px;-webkit-text-stroke:0.35px #ccccdc;">55</span>
<span class="t" style="left:1363.24px;top:688px;font-size:20.8px;line-height:20.8px;color:#ccccdc;letter-spacing:0.300px;-webkit-text-stroke:0.35px #ccccdc;">60</span>
<span class="t" style="left:1466.35px;top:688px;font-size:20.8px;line-height:20.8px;color:#ccccdc;letter-spacing:0.300px;-webkit-text-stroke:0.35px #ccccdc;">65</span>
<svg class="b" style="left:83px;top:731px" width="26" height="10" viewBox="83 731 26 10"><rect x="84.50" y="732.80" width="23.00" height="6.60" rx="3.30" fill="#73bf69" stroke="none" stroke-width="0"/></svg>
<span class="t" style="left:120.88px;top:725px;font-size:20.0px;line-height:20.0px;color:#ccccdc;letter-spacing:0.229px;-webkit-text-stroke:0.35px #ccccdc;">Value #A</span>
<svg class="b" style="left:36px;top:858px" width="1553" height="7" viewBox="36 858 1553 7"><rect x="37.00" y="860.30" width="1551.00" height="2" fill="#2c2e35"/></svg>
<svg class="b" style="left:93.00px;top:820.00px;" width="18.50" height="22.00" viewBox="0 0 18.5 22"><g fill="none" stroke="#ccccdc" stroke-width="1.8" stroke-linecap="round"><ellipse cx="9.25" cy="4.6" rx="7.8" ry="3.5"/><path d="M1.45 4.6 V17.4 C1.45 21.9 17.05 21.9 17.05 17.4 V4.6 M1.45 11 C1.45 15.4 17.05 15.4 17.05 11"/><path d="M4.6 13.6 h.1 M4.6 18.6 h.1" stroke-width="2"/></g></svg>
<span class="t" style="left:128.25px;top:817px;font-size:22.52px;line-height:22.52px;color:#ccccdc;letter-spacing:0.853px;-webkit-text-stroke:1.1px #ccccdc;">Queries</span>
<svg class="b" style="left:225px;top:813px" width="38" height="32" viewBox="225 813 38 32"><rect x="226.20" y="814.00" width="35.10" height="30.00" rx="15.00" fill="#2e3037" stroke="none" stroke-width="0"/></svg>
<span class="t" style="left:238.95px;top:819px;font-size:20.0px;line-height:20.0px;color:#ccccdc;letter-spacing:0.000px;-webkit-text-stroke:0.3px #ccccdc;">1</span>
<div class="b" style="left:63.2px;top:856px;width:223.8px;height:3.4px;border-radius:2px;background:linear-gradient(90deg,#ff8c35,#f55f3e)"></div>
<svg class="b" style="left:308px;top:812px" width="36" height="36" viewBox="308 812 36 36"><g fill="none" stroke="#8f909e" stroke-width="1.9" stroke-linecap="round" stroke-linejoin="round"><path d="M327.7 820.7 Q319.10 822.05 317.3 825.6"/><path d="M317.3 820.2 L317.3 825.6 L322.9 825.6"/><path d="M316.1 829.3 Q315.25 834.85 321.0 839.0"/><path d="M315.5 839.0 L321.0 839.0 L321.0 833.8"/><path d="M324.3 840.6 Q330.05 841.45 334.4 835.7"/><path d="M329.0 835.7 L334.4 835.7 L334.4 841.1"/><path d="M336.1 832.0 Q337.05 827.45 331.0 822.3"/><path d="M336.5 822.3 L331.0 822.3 L331.0 827.8"/></g></svg>
<span class="t" style="left:352.68px;top:817px;font-size:23.4px;line-height:23.4px;color:#8f909e;letter-spacing:0.645px;-webkit-text-stroke:0.35px #8f909e;">Transformations</span>
<svg class="b" style="left:542px;top:813px" width="37" height="32" viewBox="542 813 37 32"><rect x="543.70" y="814.00" width="33.90" height="30.00" rx="15.00" fill="#2e3037" stroke="none" stroke-width="0"/></svg>
<span class="t" style="left:555.95px;top:819px;font-size:20.0px;line-height:20.0px;color:#ccccdc;letter-spacing:0.000px;-webkit-text-stroke:0.3px #ccccdc;">1</span>
<svg class="b" style="left:1585px;top:860px" width="6" height="511" viewBox="1585 860 6 511"><rect x="1587.20" y="861.00" width="1.6" height="509.00" fill="#2a2c33"/></svg>
<svg class="b" style="left:62px;top:887px" width="143" height="54" viewBox="62 887 143 54"><rect x="63.20" y="888.50" width="140.10" height="51.10" rx="3.50" fill="#23252c" stroke="none" stroke-width="0"/></svg>
<span class="t" style="left:76.25px;top:904px;font-size:19.12px;line-height:19.12px;color:#ccccdc;letter-spacing:1.080px;-webkit-text-stroke:1.1px #ccccdc;">Data source</span>
<svg class="b" style="left:209px;top:887px" width="460" height="55" viewBox="209 887 460 55"><rect x="211.00" y="888.80" width="455.70" height="50.50" rx="2.70" fill="#111217" stroke="#363840" stroke-width="1.6"/></svg>
<svg class="b" style="left:0.00px;top:0.00px;" width="300.00" height="940.00" viewBox="0 0 300 940"><defs><linearGradient id="lk" x1="0" y1="0" x2="0" y2="1"><stop offset="0" stop-color="#ea5b2a"/><stop offset="1" stop-color="#eaa626"/></linearGradient></defs><polygon points="227.00,903.20 228.92,905.25 232.22,921.30 229.38,921.90 226.08,905.85" fill="url(#lk)"/><polygon points="229.70,899.60 231.62,901.65 235.72,920.90 232.88,921.50 228.78,902.25" fill="url(#lk)"/><polygon points="235.30,903.60 237.22,905.65 239.52,920.10 236.68,920.70 234.38,906.25" fill="url(#lk)"/><rect x="230.20" y="923.60" width="2.4" height="2.4" rx=".5" fill="#f5d31c" transform="rotate(-12 231.4 924.8)"/><rect x="234.00" y="922.80" width="2.4" height="2.4" rx=".5" fill="#f5d31c" transform="rotate(-12 235.2 924.0)"/><rect x="237.80" y="922.00" width="2.4" height="2.4" rx=".5" fill="#f5d31c" transform="rotate(-12 239.0 923.2)"/><rect x="231.00" y="927.00" width="2.4" height="2.4" rx=".5" fill="#f5d31c" transform="rotate(-12 232.2 928.2)"/><rect x="234.70" y="926.30" width="2.4" height="2.4" rx=".5" fill="#f5d31c" transform="rotate(-12 235.9 927.5)"/><rect x="238.40" y="925.50" width="2.4" height="2.4" rx=".5" fill="#f5d31c" transform="rotate(-12 239.6 926.7)"/><line x1="241.4" y1="922.9" x2="252.2" y2="920.6" stroke="#f5d31c" stroke-width="2.5"/><line x1="242.2" y1="926.5" x2="252.8" y2="924.3" stroke="#f5d31c" stroke-width="2.5"/></svg>
<span class="t" style="left:264.38px;top:903px;font-size:23.4px;line-height:23.4px;color:#ccccdc;letter-spacing:0.690px;-webkit-text-stroke:0.35px #ccccdc;">grafanacloud-geodemo-logs</span>
<svg class="b" style="left:632.50px;top:904.60px" width="20" height="20" viewBox="-10 -10 20 20"><path d="M-4.8 -2.45 L0 2.45 L4.8 -2.45" fill="none" stroke="#a4a4b6" stroke-width="2.25" stroke-linecap="round" stroke-linejoin="round"/></svg>
<svg class="b" style="left:672px;top:887px" width="56" height="55" viewBox="672 887 56 55"><rect x="674.50" y="888.80" width="51.00" height="50.50" rx="2.70" fill="#2d2f36" stroke="#3a3c44" stroke-width="1.6"/></svg>
<svg class="b" style="left:687.80px;top:901.90px;" width="26.00" height="26.00" viewBox="0 0 24 24"><g fill="none" stroke="#ccccdc" stroke-width="2.0" stroke-linecap="round" stroke-linejoin="round"><circle cx="12" cy="12" r="9"/><path d="M9.6 9.6 a2.5 2.5 0 1 1 3.6 2.3 c-.8 .4 -1.2 .9 -1.2 1.8"/><circle cx="12" cy="16.6" r=".6" fill="currentColor"/></g></svg>
<svg class="b" style="left:731px;top:887px" width="588" height="54" viewBox="731 887 588 54"><rect x="732.50" y="888.50" width="585.00" height="51.10" rx="3.50" fill="#23252c" stroke="none" stroke-width="0"/></svg>
<svg class="b" style="left:748.75px;top:904.00px" width="20" height="20" viewBox="-10 -10 20 20"><path d="M-2.45 -4.8 L2.45 0 L-2.45 4.8" fill="none" stroke="#8f909e" stroke-width="2.25" stroke-linecap="round" stroke-linejoin="round"/></svg>
<span class="t" style="left:784.55px;top:903px;font-size:22.52px;line-height:22.52px;color:#6e9fff;letter-spacing:1.249px;-webkit-text-stroke:1.1px #6e9fff;">Query options</span>
<span class="t" style="left:972.88px;top:903px;font-size:20.0px;line-height:20.0px;color:#8f909e;letter-spacing:0.756px;-webkit-text-stroke:0.35px #8f909e;">MD = auto = 940</span>
<span class="t" style="left:1159.17px;top:903px;font-size:20.0px;line-height:20.0px;color:#8f909e;letter-spacing:0.654px;-webkit-text-stroke:0.35px #8f909e;">Interval = 2s</span>
<svg class="b" style="left:1322px;top:887px" width="234" height="55" viewBox="1322 887 234 55"><rect x="1324.00" y="888.80" width="230.00" height="50.50" rx="2.70" fill="#2d2f36" stroke="#3a3c44" stroke-width="1.6"/></svg>
<span class="t" style="left:1349.55px;top:903px;font-size:22.52px;line-height:22.52px;color:#ccccdc;letter-spacing:1.284px;-webkit-text-stroke:1.1px #ccccdc;">Query inspector</span>
<svg class="b" style="left:62px;top:991px" width="1500" height="54" viewBox="62 991 1500 54"><rect x="63.20" y="992.50" width="1497.30" height="51.10" rx="3.50" fill="#23252c" stroke="none" stroke-width="0"/></svg>
<svg class="b" style="left:79.20px;top:1008.80px" width="20" height="20" viewBox="-10 -10 20 20"><path d="M-4.8 -2.45 L0 2.45 L4.8 -2.45" fill="none" stroke="#b0b0c2" stroke-width="2.1" stroke-linecap="round" stroke-linejoin="round"/></svg>
<span class="t" style="left:131.05px;top:1007px;font-size:22.52px;line-height:22.52px;color:#6e9fff;letter-spacing:0.000px;-webkit-text-stroke:1.1px #6e9fff;">A</span>
<span class="t" style="left:214.18px;top:1007px;font-size:20.0px;line-height:20.0px;color:#8f909e;letter-spacing:0.863px;font-style:italic;-webkit-text-stroke:0.35px #8f909e;">(grafanacloud-geodemo-logs)</span>
<svg class="b" style="left:101px;top:1055px" width="229" height="43" viewBox="101 1055 229 43"><rect x="102.80" y="1057.70" width="224.60" height="37.70" rx="2.70" fill="#2d2f36" stroke="#3a3c44" stroke-width="1.6"/></svg>
<span class="t" style="left:115.05px;top:1067px;font-size:19.12px;line-height:19.12px;color:#ccccdc;letter-spacing:1.189px;-webkit-text-stroke:1.1px #ccccdc;">Kick start your query</span>
<svg class="b" style="left:339px;top:1055px" width="164" height="43" viewBox="339 1055 164 43"><rect x="341.10" y="1057.70" width="159.90" height="37.70" rx="2.70" fill="#2d2f36" stroke="#3a3c44" stroke-width="1.6"/></svg>
<span class="t" style="left:353.15px;top:1067px;font-size:19.12px;line-height:19.12px;color:#ccccdc;letter-spacing:1.069px;-webkit-text-stroke:1.1px #ccccdc;">Label browser</span>
<svg class="b" style="left:1218px;top:1055px" width="127" height="43" viewBox="1218 1055 127 43"><rect x="1220.50" y="1057.70" width="122.50" height="37.70" rx="2.70" fill="#2d2f36" stroke="#3a3c44" stroke-width="1.6"/></svg>
<span class="t" style="left:1233.15px;top:1067px;font-size:19.12px;line-height:19.12px;color:#ccccdc;letter-spacing:0.924px;-webkit-text-stroke:1.1px #ccccdc;">Run query</span>
<span class="t" style="left:539.38px;top:1066px;font-size:20.0px;line-height:20.0px;color:#8f909e;letter-spacing:0.522px;-webkit-text-stroke:0.35px #8f909e;">Explain query</span>
<svg class="b" style="left:680px;top:1060px" width="55" height="30" viewBox="680 1060 55 30"><rect x="682.30" y="1062.70" width="50.60" height="24.70" rx="11.85" fill="#111217" stroke="#33353d" stroke-width="1.6"/></svg>
<svg class="b" style="left:684px;top:1064px" width="22" height="22" viewBox="684 1064 22 22"><rect x="685.20" y="1065.45" width="19.20" height="19.20" rx="9.60" fill="#93939f" stroke="none" stroke-width="0"/></svg>
<svg class="b" style="left:1381px;top:1055px" width="181" height="43" viewBox="1381 1055 181 43"><rect x="1382.80" y="1057.70" width="177.40" height="37.70" rx="2.70" fill="none" stroke="#363840" stroke-width="1.6"/></svg>
<svg class="b" style="left:1478px;top:1061px" width="79" height="31" viewBox="1478 1061 79 31"><rect x="1479.70" y="1062.30" width="76.10" height="28.50" rx="3.00" fill="#2e3037" stroke="none" stroke-width="0"/></svg>
<span class="t" style="left:1399.77px;top:1066px;font-size:20.0px;line-height:20.0px;color:#8f909e;letter-spacing:0.542px;-webkit-text-stroke:0.35px #8f909e;">Builder</span>
<span class="t" style="left:1493.55px;top:1067px;font-size:19.12px;line-height:19.12px;color:#ccccdc;letter-spacing:1.015px;-webkit-text-stroke:1.1px #ccccdc;">Code</span>
<svg class="b" style="left:101px;top:1108px" width="1461" height="88" viewBox="101 1108 1461 88"><rect x="102.80" y="1109.90" width="1457.40" height="84.20" rx="2.70" fill="#111217" stroke="#363840" stroke-width="1.6"/></svg>
<span class="t" style="left:116.60px;top:1126px;font-size:22.4px;line-height:22.4px;color:#45c9b0;letter-spacing:0.169px;font-family:'Liberation Mono', 'DejaVu Sans Mono', monospace;-webkit-text-stroke:0.45px #45c9b0;">sum</span>
<span class="t" style="left:157.43px;top:1126px;font-size:22.4px;line-height:22.4px;color:#d7d7df;letter-spacing:0.169px;font-family:'Liberation Mono', 'DejaVu Sans Mono', monospace;-webkit-text-stroke:0.45px #d7d7df;"> </span>
<span class="t" style="left:171.04px;top:1126px;font-size:22.4px;line-height:22.4px;color:#45c9b0;letter-spacing:0.169px;font-family:'Liberation Mono', 'DejaVu Sans Mono', monospace;-webkit-text-stroke:0.45px #45c9b0;">by</span>
<span class="t" style="left:198.27px;top:1126px;font-size:22.4px;line-height:22.4px;color:#d7d7df;letter-spacing:0.169px;font-family:'Liberation Mono', 'DejaVu Sans Mono', monospace;-webkit-text-stroke:0.45px #d7d7df;"> (</span>
<span class="t" style="left:225.49px;top:1126px;font-size:22.4px;line-height:22.4px;color:#7dc86e;letter-spacing:0.169px;font-family:'Liberation Mono', 'DejaVu Sans Mono', monospace;-webkit-text-stroke:0.45px #7dc86e;">geo_country_iso</span>
<span class="t" style="left:429.65px;top:1126px;font-size:22.4px;line-height:22.4px;color:#d7d7df;letter-spacing:0.169px;font-family:'Liberation Mono', 'DejaVu Sans Mono', monospace;-webkit-text-stroke:0.45px #d7d7df;">) (</span>
<span class="t" style="left:470.49px;top:1126px;font-size:22.4px;line-height:22.4px;color:#45c9b0;letter-spacing:0.169px;font-family:'Liberation Mono', 'DejaVu Sans Mono', monospace;-webkit-text-stroke:0.45px #45c9b0;">count_over_time</span>
<span class="t" style="left:674.65px;top:1126px;font-size:22.4px;line-height:22.4px;color:#d7d7df;letter-spacing:0.169px;font-family:'Liberation Mono', 'DejaVu Sans Mono', monospace;-webkit-text-stroke:0.45px #d7d7df;">({</span>
<span class="t" style="left:701.87px;top:1126px;font-size:22.4px;line-height:22.4px;color:#7dc86e;letter-spacing:0.169px;font-family:'Liberation Mono', 'DejaVu Sans Mono', monospace;-webkit-text-stroke:0.45px #7dc86e;">app_id</span>
<span class="t" style="left:783.54px;top:1126px;font-size:22.4px;line-height:22.4px;color:#d7d7df;letter-spacing:0.169px;font-family:'Liberation Mono', 'DejaVu Sans Mono', monospace;-webkit-text-stroke:0.45px #d7d7df;">=</span>
<span class="t" style="left:797.15px;top:1126px;font-size:22.4px;line-height:22.4px;color:#d39a80;letter-spacing:0.169px;font-family:'Liberation Mono', 'DejaVu Sans Mono', monospace;-webkit-text-stroke:0.45px #d39a80;">&quot;46&quot;</span>
<span class="t" style="left:851.59px;top:1126px;font-size:22.4px;line-height:22.4px;color:#d7d7df;letter-spacing:0.169px;font-family:'Liberation Mono', 'DejaVu Sans Mono', monospace;-webkit-text-stroke:0.45px #d7d7df;">, </span>
<span class="t" style="left:878.82px;top:1126px;font-size:22.4px;line-height:22.4px;color:#7dc86e;letter-spacing:0.169px;font-family:'Liberation Mono', 'DejaVu Sans Mono', monospace;-webkit-text-stroke:0.45px #7dc86e;">kind</span>
<span class="t" style="left:933.26px;top:1126px;font-size:22.4px;line-height:22.4px;color:#d7d7df;letter-spacing:0.169px;font-family:'Liberation Mono', 'DejaVu Sans Mono', monospace;-webkit-text-stroke:0.45px #d7d7df;">=</span>
<span class="t" style="left:946.87px;top:1126px;font-size:22.4px;line-height:22.4px;color:#d39a80;letter-spacing:0.169px;font-family:'Liberation Mono', 'DejaVu Sans Mono', monospace;-webkit-text-stroke:0.45px #d39a80;">&quot;event&quot;</span>
<span class="t" style="left:1042.15px;top:1126px;font-size:22.4px;line-height:22.4px;color:#d7d7df;letter-spacing:0.169px;font-family:'Liberation Mono', 'DejaVu Sans Mono', monospace;-webkit-text-stroke:0.45px #d7d7df;">} |= </span>
<span class="t" style="left:1110.20px;top:1126px;font-size:22.4px;line-height:22.4px;color:#d39a80;letter-spacing:0.169px;font-family:'Liberation Mono', 'DejaVu Sans Mono', monospace;-webkit-text-stroke:0.45px #d39a80;">`session_start`</span>
<span class="t" style="left:1314.37px;top:1126px;font-size:22.4px;line-height:22.4px;color:#d7d7df;letter-spacing:0.169px;font-family:'Liberation Mono', 'DejaVu Sans Mono', monospace;-webkit-text-stroke:0.45px #d7d7df;"> |=</span>
<span class="t" style="left:116.60px;top:1160px;font-size:22.4px;line-height:22.4px;color:#d39a80;letter-spacing:0.169px;font-family:'Liberation Mono', 'DejaVu Sans Mono', monospace;-webkit-text-stroke:0.45px #d39a80;">`geo_country_iso=`</span>
<span class="t" style="left:361.60px;top:1160px;font-size:22.4px;line-height:22.4px;color:#d7d7df;letter-spacing:0.169px;font-family:'Liberation Mono', 'DejaVu Sans Mono', monospace;-webkit-text-stroke:0.45px #d7d7df;"> | </span>
<span class="t" style="left:402.43px;top:1160px;font-size:22.4px;line-height:22.4px;color:#45c9b0;letter-spacing:0.169px;font-family:'Liberation Mono', 'DejaVu Sans Mono', monospace;-webkit-text-stroke:0.45px #45c9b0;">logfmt</span>
<span class="t" style="left:484.10px;top:1160px;font-size:22.4px;line-height:22.4px;color:#d7d7df;letter-spacing:0.169px;font-family:'Liberation Mono', 'DejaVu Sans Mono', monospace;-webkit-text-stroke:0.45px #d7d7df;">[$__range]))</span>
<svg class="b" style="left:101px;top:1200px" width="1461" height="66" viewBox="101 1200 1461 66"><rect x="102.50" y="1201.80" width="1458.00" height="62.90" rx="3.50" fill="#23252c" stroke="none" stroke-width="0"/></svg>
<svg class="b" style="left:118.00px;top:1221.40px" width="20" height="20" viewBox="-10 -10 20 20"><path d="M-2.45 -4.8 L2.45 0 L-2.45 4.8" fill="none" stroke="#ccccdc" stroke-width="2.25" stroke-linecap="round" stroke-linejoin="round"/></svg>
<span class="t" style="left:154.95px;top:1219px;font-size:19.12px;line-height:19.12px;color:#ccccdc;letter-spacing:1.083px;-webkit-text-stroke:1.1px #ccccdc;">Options</span>
<span class="t" style="left:255.08px;top:1219px;font-size:20.0px;line-height:20.0px;color:#8f909e;letter-spacing:0.433px;-webkit-text-stroke:0.35px #8f909e;">Type: Instant</span>
<svg class="b" style="left:1062.80px;top:1223.40px;" width="19.60" height="19.60" viewBox="0 0 19.6 19.6"><g fill="none" stroke="#ccccdc" stroke-width="1.7" stroke-linecap="round"><circle cx="9.8" cy="9.8" r="8.6"/><path d="M9.8 9 V14.2"/><path d="M9.8 5.6 v.1" stroke-width="2.1"/></g></svg>
<span class="t" style="left:1089.38px;top:1226px;font-size:20.0px;line-height:20.0px;color:#8f909e;letter-spacing:0.613px;-webkit-text-stroke:0.35px #8f909e;">This query will process approximately 562.9 KiB.</span>
<svg class="b" style="left:62px;top:1289px" width="209" height="55" viewBox="62 1289 209 55"><rect x="63.80" y="1291.30" width="205.40" height="50.80" rx="2.70" fill="#2d2f36" stroke="#3a3c44" stroke-width="1.6"/></svg>
<svg class="b" style="left:89.00px;top:1304.40px;" width="26.00" height="26.00" viewBox="0 0 24 24"><g fill="none" stroke="#ccccdc" stroke-width="1.6" stroke-linecap="round" stroke-linejoin="round"><path d="M12 5 V19 M5 12 H19"/></g></svg>
<span class="t" style="left:129.35px;top:1306px;font-size:22.52px;line-height:22.52px;color:#ccccdc;letter-spacing:1.127px;-webkit-text-stroke:1.1px #ccccdc;">Add query</span>
<svg class="b" style="left:294px;top:1289px" width="223" height="55" viewBox="294 1289 223 55"><rect x="295.90" y="1291.30" width="218.80" height="50.80" rx="2.70" fill="#2d2f36" stroke="#3a3c44" stroke-width="1.6"/></svg>
<svg class="b" style="left:321.30px;top:1304.40px;" width="26.00" height="26.00" viewBox="0 0 24 24"><g fill="none" stroke="#ccccdc" stroke-width="1.6" stroke-linecap="round" stroke-linejoin="round"><path d="M12 5 V19 M5 12 H19"/></g></svg>
<span class="t" style="left:360.45px;top:1306px;font-size:22.52px;line-height:22.52px;color:#ccccdc;letter-spacing:1.094px;-webkit-text-stroke:1.1px #ccccdc;">Expression</span>
<svg class="b" style="left:526px;top:1289px" width="272" height="55" viewBox="526 1289 272 55"><rect x="528.70" y="1291.30" width="266.60" height="50.80" rx="2.70" fill="#2d2f36" stroke="#3a3c44" stroke-width="1.6"/></svg>
<svg class="b" style="left:553.30px;top:1304.40px;" width="26.00" height="26.00" viewBox="0 0 24 24"><g fill="none" stroke="#ccccdc" stroke-width="1.6" stroke-linecap="round" stroke-linejoin="round"><path d="M12 5 V19 M5 12 H19"/></g></svg>
<span class="t" style="left:592.95px;top:1306px;font-size:22.52px;line-height:22.52px;color:#ccccdc;letter-spacing:1.096px;-webkit-text-stroke:1.1px #ccccdc;">Recorded query</span>
<svg class="b" style="left:1246.45px;top:1006.15px;" width="25.50" height="25.50" viewBox="0 0 24 24"><g fill="none" stroke="#9a9aab" stroke-width="2.1" stroke-linecap="round" stroke-linejoin="round"><circle cx="12" cy="12" r="9"/><path d="M9.6 9.6 a2.5 2.5 0 1 1 3.6 2.3 c-.8 .4 -1.2 .9 -1.2 1.8"/><circle cx="12" cy="16.6" r=".6" fill="currentColor"/></g></svg>
<svg class="b" style="left:1291.45px;top:1006.15px;" width="25.50" height="25.50" viewBox="0 0 24 24"><g fill="none" stroke="#9a9aab" stroke-width="2.1" stroke-linecap="round" stroke-linejoin="round"><circle cx="12" cy="12" r="9.3"/><circle cx="12" cy="12" r="5"/></g></svg>
<svg class="b" style="left:1336.60px;top:1005.00px;" width="27.00" height="27.00" viewBox="0 0 24 24"><g fill="none" stroke="#ccccdc" stroke-width="2.0" stroke-linecap="round" stroke-linejoin="round"><path d="M12 3 L21.8 20.2 H2.2 Z"/><path d="M12 9.6 V14.4"/><path d="M12 17.3 v.1" stroke-width="2.3"/></g></svg>
<svg class="b" style="left:1376.15px;top:1005.95px;" width="25.50" height="25.50" viewBox="0 0 24 24"><g fill="none" stroke="#9a9aab" stroke-width="2.1" stroke-linecap="round" stroke-linejoin="round"><path d="M11.4 3 H15.6 L20.1 7.5 V14.9 a2.4 2.4 0 0 1 -2.4 2.4 H11.4 a2.4 2.4 0 0 1 -2.4 -2.4 V5.4 a2.4 2.4 0 0 1 2.4 -2.4 Z"/><path d="M15.3 3.4 V7.8 H19.7"/><path d="M15.3 17.7 V18.7 a2.4 2.4 0 0 1 -2.4 2.4 H6.1 a2.4 2.4 0 0 1 -2.4 -2.4 V10.4 a2.4 2.4 0 0 1 2.4 -2.4 H8.7"/></g></svg>
<svg class="b" style="left:1422.40px;top:1007.00px;" width="24.00" height="24.00" viewBox="0 0 24 24"><g fill="none" stroke="#9a9aab" stroke-width="2.2" stroke-linecap="round" stroke-linejoin="round"><path d="M1.6 12 C5 6.4 8.6 4.6 12 4.6 S19 6.4 22.4 12 C19 17.6 15.4 19.4 12 19.4 S5 17.6 1.6 12 Z"/><circle cx="12" cy="12" r="3.1"/></g></svg>
<svg class="b" style="left:1466.95px;top:1006.25px;" width="25.50" height="25.50" viewBox="0 0 24 24"><g fill="none" stroke="#9a9aab" stroke-width="2.1" stroke-linecap="round" stroke-linejoin="round"><path d="M2.8 6.4 H21.2 M8.6 6.2 V4 a1.2 1.2 0 0 1 1.2 -1.2 H14.2 a1.2 1.2 0 0 1 1.2 1.2 V6.2 M5.4 6.8 V19.6 a2 2 0 0 0 2 2 H16.6 a2 2 0 0 0 2 -2 V6.8 M10 10.6 V17.4 M14 10.6 V17.4"/></g></svg>
<svg class="b" style="left:1525px;top:1008px" width="8" height="8" viewBox="1525 1008 8 8"><rect x="1526.85" y="1009.55" width="4.50" height="4.50" rx="2.25" fill="#9a9aab" stroke="none" stroke-width="0"/></svg>
<svg class="b" style="left:1525px;top:1017px" width="8" height="7" viewBox="1525 1017 8 7"><rect x="1526.85" y="1018.25" width="4.50" height="4.50" rx="2.25" fill="#9a9aab" stroke="none" stroke-width="0"/></svg>
<svg class="b" style="left:1525px;top:1025px" width="8" height="8" viewBox="1525 1025 8 8"><rect x="1526.85" y="1026.85" width="4.50" height="4.50" rx="2.25" fill="#9a9aab" stroke="none" stroke-width="0"/></svg>
<svg class="b" style="left:1534px;top:1008px" width="7" height="8" viewBox="1534 1008 7 8"><rect x="1535.25" y="1009.55" width="4.50" height="4.50" rx="2.25" fill="#9a9aab" stroke="none" stroke-width="0"/></svg>
<svg class="b" style="left:1534px;top:1017px" width="7" height="7" viewBox="1534 1017 7 7"><rect x="1535.25" y="1018.25" width="4.50" height="4.50" rx="2.25" fill="#9a9aab" stroke="none" stroke-width="0"/></svg>
<svg class="b" style="left:1534px;top:1025px" width="7" height="8" viewBox="1534 1025 7 8"><rect x="1535.25" y="1026.85" width="4.50" height="4.50" rx="2.25" fill="#9a9aab" stroke="none" stroke-width="0"/></svg>
<svg class="b" style="left:1612px;top:94px" width="6" height="1277" viewBox="1612 94 6 1277"><rect x="1614.20" y="95.00" width="1.6" height="1275.00" fill="#2a2c33"/></svg>
<svg class="b" style="left:1628px;top:121px" width="365" height="54" viewBox="1628 121 365 54"><rect x="1629.80" y="122.80" width="361.20" height="49.90" rx="2.70" fill="#2d2f36" stroke="#3a3c44" stroke-width="1.6"/></svg>
<svg class="b" style="left:1644px;top:134px" width="26" height="27" viewBox="0 0 26 27"><defs><linearGradient id="bo" x1="0" y1="0" x2="0" y2="1"><stop offset="0" stop-color="#ff9830"/><stop offset="1" stop-color="#fade2a"/></linearGradient></defs><rect x="0" y="11.4" width="3" height="12.4" rx=".8" fill="#3865ab"/><rect x="3.6" y="15.8" width="3.4" height="8" rx=".8" fill="url(#bo)"/><rect x="9.4" y="13" width="3" height="10.8" rx=".8" fill="#3865ab"/><rect x="12.8" y="7" width="3.5" height="16.8" rx=".8" fill="url(#bo)"/><rect x="18.8" y="3.2" width="3" height="20.6" rx=".8" fill="#3865ab"/><rect x="22.2" y=".6" width="3.4" height="23.2" rx=".8" fill="url(#bo)"/><rect x="0" y="25" width="25.6" height="1.9" fill="#3865ab"/></svg>
<span class="t" style="left:1683.25px;top:138px;font-size:22.52px;line-height:22.52px;color:#ccccdc;letter-spacing:0.976px;-webkit-text-stroke:1.1px #ccccdc;">Bar chart</span>
<svg class="b" style="left:1954.10px;top:137.65px" width="20" height="20" viewBox="-10 -10 20 20"><path d="M-4.8 -2.45 L0 2.45 L4.8 -2.45" fill="none" stroke="#ccccdc" stroke-width="2.25" stroke-linecap="round" stroke-linejoin="round"/></svg>
<svg class="b" style="left:1628px;top:199px" width="365" height="54" viewBox="1628 199 365 54"><rect x="1629.80" y="201.00" width="361.20" height="49.50" rx="2.70" fill="#111217" stroke="#363840" stroke-width="1.6"/></svg>
<svg class="b" style="left:1642.20px;top:212.30px;" width="26.00" height="26.00" viewBox="0 0 24 24"><g fill="none" stroke="#8f909e" stroke-width="2.0" stroke-linecap="round" stroke-linejoin="round"><circle cx="11" cy="11" r="7.5"/><path d="M16.5 16.5 L21 21"/></g></svg>
<span class="t" style="left:1676.67px;top:215px;font-size:23.4px;line-height:23.4px;color:#8f909e;letter-spacing:0.308px;-webkit-text-stroke:0.35px #8f909e;">Search options</span>
<svg class="b" style="left:1628px;top:276px" width="365" height="55" viewBox="1628 276 365 55"><rect x="1629.80" y="278.20" width="361.20" height="50.50" rx="2.70" fill="none" stroke="#363840" stroke-width="1.6"/></svg>
<svg class="b" style="left:1633px;top:281px" width="179" height="45" viewBox="1633 281 179 45"><rect x="1634.00" y="282.30" width="176.30" height="41.90" rx="2.50" fill="#2e3037" stroke="none" stroke-width="0"/></svg>
<span class="t" style="left:1709.25px;top:294px;font-size:22.52px;line-height:22.52px;color:#ccccdc;letter-spacing:0.840px;-webkit-text-stroke:1.1px #ccccdc;">All</span>
<span class="t" style="left:1844.17px;top:293px;font-size:23.4px;line-height:23.4px;color:#8f909e;letter-spacing:0.770px;-webkit-text-stroke:0.35px #8f909e;">Overrides</span>
<svg class="b" style="left:1614px;top:353px" width="386" height="6" viewBox="1614 353 386 6"><rect x="1615.00" y="355.00" width="384.00" height="1.6" fill="#2a2c33"/></svg>
<span class="t" style="left:1635.75px;top:380px;font-size:22.52px;line-height:22.52px;color:#ccccdc;letter-spacing:1.043px;-webkit-text-stroke:1.1px #ccccdc;">Panel options</span>
<svg class="b" style="left:1949.10px;top:380.00px" width="20" height="20" viewBox="-10 -10 20 20"><path d="M-4.8 2.45 L0 -2.45 L4.8 2.45" fill="none" stroke="#ccccdc" stroke-width="2.25" stroke-linecap="round" stroke-linejoin="round"/></svg>
<span class="t" style="left:1643.55px;top:438px;font-size:19.12px;line-height:19.12px;color:#ccccdc;letter-spacing:1.209px;-webkit-text-stroke:1.1px #ccccdc;">Title</span>
<svg class="b" style="left:1641px;top:464px" width="340" height="55" viewBox="1641 464 340 55"><rect x="1642.80" y="466.50" width="335.70" height="50.40" rx="2.70" fill="#111217" stroke="#363840" stroke-width="1.6"/></svg>
<span class="t" style="left:1656.17px;top:482px;font-size:23.4px;line-height:23.4px;color:#ccccdc;letter-spacing:0.157px;-webkit-text-stroke:0.35px #ccccdc;">Geo Sessions</span>
<span class="t" style="left:1642.55px;top:547px;font-size:19.12px;line-height:19.12px;color:#ccccdc;letter-spacing:1.264px;-webkit-text-stroke:1.1px #ccccdc;">Description</span>
<svg class="b" style="left:1641px;top:573px" width="340" height="84" viewBox="1641 573 340 84"><rect x="1642.80" y="575.30" width="335.70" height="79.70" rx="2.70" fill="#111217" stroke="#363840" stroke-width="1.6"/></svg>
<svg class="b" style="left:1964.00px;top:641.00px;" width="13.00" height="13.00" viewBox="0 0 13 13"><path d="M1.5 11.5 L11.5 1.5 M7 12 L12 7" stroke="#8f909e" stroke-width="1.2" fill="none"/></svg>
<span class="t" style="left:1643.55px;top:685px;font-size:19.12px;line-height:19.12px;color:#ccccdc;letter-spacing:1.201px;-webkit-text-stroke:1.1px #ccccdc;">Transparent background</span>
<svg class="b" style="left:1641px;top:711px" width="55" height="29" viewBox="1641 711 55 29"><rect x="1642.80" y="713.10" width="51.20" height="24.50" rx="11.75" fill="#111217" stroke="#33353d" stroke-width="1.6"/></svg>
<svg class="b" style="left:1644px;top:714px" width="22" height="22" viewBox="1644 714 22 22"><rect x="1645.70" y="715.75" width="19.20" height="19.20" rx="9.60" fill="#93939f" stroke="none" stroke-width="0"/></svg>
<div class="b" style="left:1642.00px;top:764.50px;width:336.80px;height:68.00px;background:#212329;border-top:1px solid #2a2c33;border-bottom:1px solid #2a2c33;"></div>
<span class="t" style="left:1642.55px;top:789px;font-size:22.52px;line-height:22.52px;color:#8f909e;letter-spacing:0.827px;-webkit-text-stroke:1.1px #8f909e;">Panel links</span>
<svg class="b" style="left:1942.75px;top:788.50px" width="20" height="20" viewBox="-10 -10 20 20"><path d="M-4.8 -2.45 L0 2.45 L4.8 -2.45" fill="none" stroke="#ccccdc" stroke-width="2.25" stroke-linecap="round" stroke-linejoin="round"/></svg>
<span class="t" style="left:1642.55px;top:856px;font-size:22.52px;line-height:22.52px;color:#8f909e;letter-spacing:1.053px;-webkit-text-stroke:1.1px #8f909e;">Repeat options</span>
<svg class="b" style="left:1942.75px;top:854.75px" width="20" height="20" viewBox="-10 -10 20 20"><path d="M-4.8 -2.45 L0 2.45 L4.8 -2.45" fill="none" stroke="#ccccdc" stroke-width="2.25" stroke-linecap="round" stroke-linejoin="round"/></svg>
<svg class="b" style="left:1614px;top:908px" width="386" height="6" viewBox="1614 908 386 6"><rect x="1615.00" y="910.20" width="384.00" height="1.6" fill="#2a2c33"/></svg>
<span class="t" style="left:1635.75px;top:935px;font-size:22.52px;line-height:22.52px;color:#ccccdc;letter-spacing:0.976px;-webkit-text-stroke:1.1px #ccccdc;">Bar chart</span>
<svg class="b" style="left:1949.10px;top:935.25px" width="20" height="20" viewBox="-10 -10 20 20"><path d="M-4.8 2.45 L0 -2.45 L4.8 2.45" fill="none" stroke="#ccccdc" stroke-width="2.25" stroke-linecap="round" stroke-linejoin="round"/></svg>
<span class="t" style="left:1643.55px;top:993px;font-size:19.12px;line-height:19.12px;color:#ccccdc;letter-spacing:0.700px;-webkit-text-stroke:1.1px #ccccdc;">X Axis</span>
<svg class="b" style="left:1641px;top:1020px" width="338" height="53" viewBox="1641 1020 338 53"><rect x="1642.80" y="1021.80" width="334.10" height="49.20" rx="2.70" fill="#111217" stroke="#363840" stroke-width="1.6"/></svg>
<span class="t" style="left:1659.88px;top:1036px;font-size:23.4px;line-height:23.4px;color:#8f909e;letter-spacing:0.720px;-webkit-text-stroke:0.35px #8f909e;">First string or time field</span>
<svg class="b" style="left:1940.20px;top:1038.00px" width="20" height="20" viewBox="-10 -10 20 20"><path d="M-4.8 -2.45 L0 2.45 L4.8 -2.45" fill="none" stroke="#ccccdc" stroke-width="2.25" stroke-linecap="round" stroke-linejoin="round"/></svg>
<span class="t" style="left:1643.55px;top:1102px;font-size:19.12px;line-height:19.12px;color:#ccccdc;letter-spacing:1.045px;-webkit-text-stroke:1.1px #ccccdc;">Orientation</span>
<svg class="b" style="left:1641px;top:1128px" width="461" height="54" viewBox="1641 1128 461 54"><rect x="1642.80" y="1130.00" width="456.90" height="49.80" rx="2.70" fill="none" stroke="#363840" stroke-width="1.6"/></svg>
<svg class="b" style="left:1748px;top:1133px" width="169" height="44" viewBox="1748 1133 169 44"><rect x="1749.90" y="1134.50" width="165.70" height="41.50" rx="3.00" fill="#2e3037" stroke="none" stroke-width="0"/></svg>
<span class="t" style="left:1673.47px;top:1145px;font-size:23.4px;line-height:23.4px;color:#8f909e;letter-spacing:0.414px;-webkit-text-stroke:0.35px #8f909e;">Auto</span>
<span class="t" style="left:1775.25px;top:1145px;font-size:22.52px;line-height:22.52px;color:#ccccdc;letter-spacing:1.460px;-webkit-text-stroke:1.1px #ccccdc;">Horizontal</span>
<span class="t" style="left:1942.17px;top:1145px;font-size:23.4px;line-height:23.4px;color:#8f909e;letter-spacing:1.163px;-webkit-text-stroke:0.35px #8f909e;">Vertical</span>
<span class="t" style="left:1642.55px;top:1211px;font-size:19.12px;line-height:19.12px;color:#ccccdc;letter-spacing:1.026px;-webkit-text-stroke:1.1px #ccccdc;">Rotate x-axis tick labels</span>
<svg class="b" style="left:1652px;top:1259px" width="162" height="9" viewBox="1652 1259 162 9"><rect x="1653.20" y="1260.60" width="159.00" height="6.40" rx="3.20" fill="#44464f" stroke="none" stroke-width="0"/></svg>
<svg class="b" style="left:1645px;top:1256px" width="16" height="16" viewBox="1645 1256 16 16"><rect x="1646.40" y="1257.00" width="13.60" height="13.60" rx="6.80" fill="#d5d5e2" stroke="none" stroke-width="0"/></svg>
<svg class="b" style="left:1685px;top:1256px" width="16" height="16" viewBox="1685 1256 16 16"><rect x="1686.10" y="1257.00" width="13.60" height="13.60" rx="6.80" fill="#d5d5e2" stroke="none" stroke-width="0"/></svg>
<svg class="b" style="left:1764px;top:1256px" width="17" height="16" viewBox="1764 1256 17 16"><rect x="1765.70" y="1257.00" width="13.60" height="13.60" rx="6.80" fill="#d5d5e2" stroke="none" stroke-width="0"/></svg>
<svg class="b" style="left:1804px;top:1256px" width="16" height="16" viewBox="1804 1256 16 16"><rect x="1805.40" y="1257.00" width="13.60" height="13.60" rx="6.80" fill="#d5d5e2" stroke="none" stroke-width="0"/></svg>
<svg class="b" style="left:1720px;top:1251px" width="26" height="26" viewBox="1720 1251 26 26"><rect x="1721.70" y="1252.50" width="22.60" height="22.60" rx="11.30" fill="#3d71d9" stroke="none" stroke-width="0"/></svg>
<span class="t" style="left:1632.97px;top:1280px;font-size:20.0px;line-height:20.0px;color:#8f909e;letter-spacing:1.116px;-webkit-text-stroke:0.35px #8f909e;">-90°-45° 0°  45° 90°</span>
<svg class="b" style="left:1850px;top:1237px" width="129" height="54" viewBox="1850 1237 129 54"><rect x="1852.60" y="1239.00" width="124.30" height="49.70" rx="2.70" fill="#111217" stroke="#363840" stroke-width="1.6"/></svg>
<span class="t" style="left:1866.88px;top:1253px;font-size:23.4px;line-height:23.4px;color:#ccccdc;letter-spacing:0.000px;-webkit-text-stroke:0.35px #ccccdc;">0</span>
<span class="t" style="left:1643.55px;top:1332px;font-size:19.12px;line-height:19.12px;color:#ccccdc;letter-spacing:1.115px;-webkit-text-stroke:1.1px #ccccdc;">X-axis labels minimum spacing</span>
<svg class="b" style="left:1641px;top:1359px" width="461" height="43" viewBox="1641 1359 461 43"><rect x="1642.80" y="1361.10" width="456.90" height="38.60" rx="2.70" fill="none" stroke="#363840" stroke-width="1.6"/></svg>
<svg class="b" style="left:1646px;top:1364px" width="113" height="37" viewBox="1646 1364 113 37"><rect x="1647.00" y="1365.20" width="110.40" height="34.80" rx="3.00" fill="#2e3037" stroke="none" stroke-width="0"/></svg>
<svg class="b" style="left:649px;top:767px" width="327" height="9" viewBox="649 767 327 9"><rect x="650.70" y="768.00" width="324.30" height="6.60" rx="3.30" fill="#3c3e46" stroke="none" stroke-width="0"/></svg>
<svg class="b" style="left:1610px;top:569px" width="9" height="327" viewBox="1610 569 9 327"><rect x="1611.70" y="570.70" width="5.90" height="324.10" rx="3.00" fill="#3c3e46" stroke="none" stroke-width="0"/></svg>
<svg class="b" style="left:-1px;top:1368px" width="2001" height="3" viewBox="-1 1368 2001 3"><rect x="0.00" y="1369.00" width="1999.00" height="1.00" rx="0.00" fill="#e9e9ee" stroke="none" stroke-width="0"/></svg>
</div></body></html>
